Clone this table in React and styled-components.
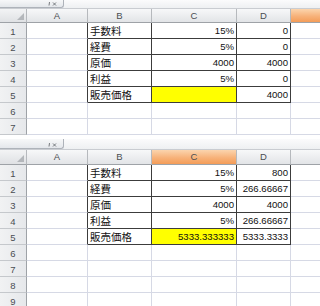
import styled, {createGlobalStyle} from "styled-components"

const GlobalStyle = createGlobalStyle`
  html, body {
    margin: 0;
    padding: 0;
    background: #fff;
    overflow: hidden;
  }
  body {
    font-family: "Liberation Sans", "Noto Sans CJK JP", sans-serif;
  }
`

const COLS = ["A", "B", "C", "D", ""]

const before = [
  ["手数料", "15%", "0"],
  ["経費", "5%", "0"],
  ["原価", "4000", "4000"],
  ["利益", "5%", "0"],
  ["販売価格", "", "4000"],
]

const after = [
  ["手数料", "15%", "800"],
  ["経費", "5%", "266.66667"],
  ["原価", "4000", "4000"],
  ["利益", "5%", "266.66667"],
  ["販売価格", "5333.333333", "5333.3333"],
]

export default function App() {
  return (
    <Page>
      <GlobalStyle />
      <Sheet rows={before} rowCount={7} activeCol={4} stripHeight={9} headHeight={14} />
      <Gap />
      <Sheet rows={after} rowCount={9} activeCol={2} stripHeight={11} headHeight={15} />
    </Page>
  )
}

// bottom of the formula bar's fx button, the rest is scrolled out of the shot
const FxStub = () => (
  <svg width="9" height="4" viewBox="0 0 9 4">
    <path d="M1.5 0 L1 3.5 M5 0.5 L8 3.5 M8 0.5 L5 3.5" stroke="#6a6d72" strokeWidth="0.9" fill="none" />
  </svg>
)

const Sheet = ({rows, rowCount, activeCol, stripHeight, headHeight}) => {
  const lines = []
  for (let r = 0; r < rowCount; r++) lines.push(r)

  return (
    <Panel>
      <Strip $h={stripHeight}>
        <NameBox>
          <FxStub />
        </NameBox>
      </Strip>
      <Grid $head={headHeight} $rows={rowCount}>
        <Corner>
          <CornerMark />
        </Corner>
        {COLS.map((c, i) => (
          <ColHead key={c + i} $active={i === activeCol} $last={i === COLS.length - 1}>
            {c}
          </ColHead>
        ))}
        {lines.map((r) => {
          const data = rows[r]
          const boxed = !!data
          return [
            <RowHead key={"h" + r}>{r + 1}</RowHead>,
            <Cell key={"a" + r} $darkRight={boxed} $darkBottom={false} />,
            <Cell key={"b" + r} $darkRight={boxed} $darkBottom={boxed}>
              {data && <Label>{data[0]}</Label>}
            </Cell>,
            <Cell
              key={"c" + r}
              $num
              $darkRight={boxed}
              $darkBottom={boxed}
              $fill={r === 4 ? "#ffff00" : null}
            >
              {data && <Num>{data[1]}</Num>}
            </Cell>,
            <Cell key={"d" + r} $num $darkRight={boxed} $darkBottom={boxed}>
              {data && <Num>{data[2]}</Num>}
            </Cell>,
            <Cell key={"e" + r} $last />,
          ]
        })}
      </Grid>
    </Panel>
  )
}

const Page = styled.div`
  width: 320px;
  height: 306px;
  overflow: hidden;
  display: flex;
  flex-direction: column;
`

const Gap = styled.div`
  height: 4px;
  flex-shrink: 0;
  background: #fff;
`

const Panel = styled.div`
  display: flex;
  flex-direction: column;
  flex-shrink: 0;
`

const Strip = styled.div`
  height: ${(p) => p.$h}px;
  box-sizing: border-box;
  background: linear-gradient(#fbfbfc, #eef0f2);
  border-bottom: 1px solid #c9ccd1;
  display: flex;
  overflow: hidden;
`

const NameBox = styled.div`
  width: 64px;
  box-sizing: border-box;
  border-right: 1px solid #aeb3ba;
  border-bottom: 1px solid #aeb3ba;
  border-bottom-right-radius: 3px;
  background: linear-gradient(#f7f8f9, #e4e7eb);
  display: flex;
  align-items: flex-end;
  justify-content: flex-end;
  padding: 0 6px 1px 0;
  overflow: hidden;
`

const Grid = styled.div`
  display: grid;
  grid-template-columns: 27px 61px 64px 85px 54px 1fr;
  grid-template-rows: ${(p) => p.$head}px repeat(${(p) => p.$rows}, 16px);
`

const Corner = styled.div`
  box-sizing: border-box;
  background: linear-gradient(#f3f4f5, #dfe1e4);
  border-right: 1px solid #b6b9bd;
  border-bottom: 1px solid #9ea2a7;
  display: flex;
  align-items: flex-end;
  justify-content: flex-end;
  padding: 0 2px 2px 0;
`

const CornerMark = styled.div`
  width: 0;
  height: 0;
  border-left: 7px solid transparent;
  border-bottom: 7px solid #b4b7bb;
`

const ColHead = styled.div`
  box-sizing: border-box;
  background: ${(p) =>
    p.$active
      ? "linear-gradient(#fbd5ae, #f7b27a 55%, #f49c58)"
      : "linear-gradient(#f7f8f9, #e2e4e7)"};
  border-right: ${(p) => (p.$last ? "none" : "1px solid #b6b9bd")};
  border-bottom: 1px solid #9ea2a7;
  color: #4a4d52;
  font-size: 9.5px;
  line-height: 1;
  display: flex;
  align-items: center;
  justify-content: center;
`

const RowHead = styled.div`
  box-sizing: border-box;
  background: linear-gradient(90deg, #f1f2f3, #e6e8eb);
  border-right: 1px solid #9ea2a7;
  border-bottom: 1px solid #c5c8cc;
  color: #4a4d52;
  font-size: 9.5px;
  line-height: 1;
  display: flex;
  align-items: flex-end;
  justify-content: center;
  padding-bottom: 2px;
`

const Cell = styled.div`
  box-sizing: border-box;
  background: ${(p) => p.$fill || "#fff"};
  border-right: ${(p) =>
    p.$last ? "none" : p.$darkRight ? "1px solid #3c3c3c" : "1px solid #d6d9e5"};
  border-bottom: ${(p) => (p.$darkBottom ? "1px solid #3c3c3c" : "1px solid #d6d9e5")};
  display: flex;
  align-items: flex-end;
  justify-content: ${(p) => (p.$num ? "flex-end" : "flex-start")};
  padding: 0 2px 1px 2px;
  overflow: hidden;
  white-space: nowrap;
  color: #111;
`

const Label = styled.span`
  font-family: "Noto Sans CJK JP", sans-serif;
  font-size: 10.5px;
  line-height: 13px;
`

const Num = styled.span`
  font-size: 9.6px;
  line-height: 12px;
`
